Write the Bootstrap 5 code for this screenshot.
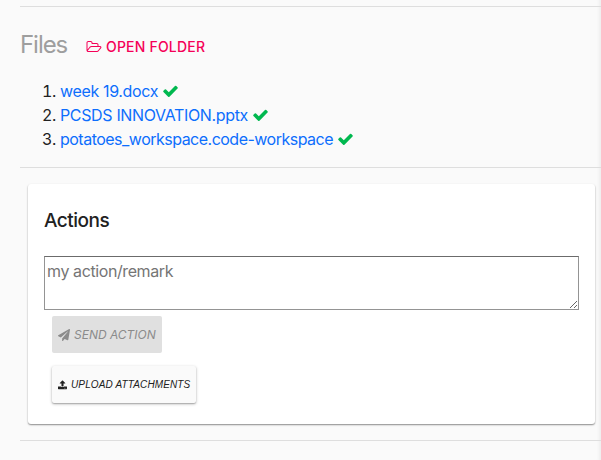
<!DOCTYPE html>
<html lang="en">
<head>
<meta charset="utf-8">
<meta name="viewport" content="width=device-width, initial-scale=1">
<title>Files and actions</title>
<link href="https://cdn.jsdelivr.net/npm/bootstrap@5.3.0/dist/css/bootstrap.min.css" rel="stylesheet">
<style>
body{background:#fafafa;color:#212121;font-family:Inter,"Liberation Sans",sans-serif;font-size:16px;line-height:24px;overflow:hidden}
.page{height:460px;padding:6px 0 0 20px;box-shadow:inset -4px 0 3px -2px #eee}
.rule{height:1px;background:#dedede}
.files-head{height:72px;padding-top:4px}
.files-title{font-size:24px;line-height:32px;font-weight:400;color:#9e9e9e;letter-spacing:-1.05px;width:66px}
.open-link{font-size:14px;font-weight:500;color:#f50057;letter-spacing:.2px;text-decoration:none;gap:4px;padding-top:3px}
.file-list{padding-left:40px;height:88px;letter-spacing:-.35px}
.file-list a{color:#0d6efd;text-decoration:none}
.file-list .long-name{letter-spacing:-.51px}
svg{fill:currentColor;display:inline-block;flex:none}
.tick{fill:#00b84f;vertical-align:-1px;margin-left:5px}
.panel{margin:16px 6px 16px 8px;height:240px;padding:24px 16px 0;border-radius:3px;box-shadow:0 1px 2px rgba(0,0,0,.32),0 1px 1px rgba(0,0,0,.16)}
.panel h2{font-size:19px;line-height:26px;font-weight:500;letter-spacing:-.5px;height:48px;color:#212121}
.remark{height:54px;padding:2px;border:1px solid #949494;border-top-color:#6b6b6b;letter-spacing:-.4px;outline:0;resize:both;background:#fff}
.remark::placeholder{color:#757575;opacity:1}
.act{border:0;border-radius:2px;font-style:italic;margin-left:8px;padding:0 6px;white-space:nowrap;text-align:left}
.send{width:110px;height:37px;margin-top:6px;background:#e0e0e0;color:#8b8b8b;font-size:12px;gap:4px}
.upload{width:144px;height:37px;margin-top:13px;background:#fafafa;color:#212121;font-family:"Liberation Sans",Arial,sans-serif;font-size:10px;letter-spacing:.13px;gap:4px;box-shadow:0 1px 3px rgba(0,0,0,.3),0 1px 1px rgba(0,0,0,.14)}
</style>
</head>
<body>
<main class="page">
  <div class="rule"></div>
  <div class="files-head d-flex align-items-center">
    <h1 class="files-title mb-0">Files</h1>
    <a class="open-link d-flex align-items-center" href="#">
      <svg width="16" height="14" viewBox="0 0 2048 1792"><path d="M1845 931q0-35-53-35h-1088q-40 0-85.500 21.500t-71.500 52.500l-294 363q-18 24-18 40 0 35 53 35h1088q40 0 86-22t71-53l294-363q18-22 18-39zm-1141-163h768v-160q0-40-28-68t-68-28h-576q-40 0-68-28t-28-68v-64q0-40-28-68t-68-28h-320q-40 0-68 28t-28 68v853l256-315q44-53 116-87.500t140-34.500zm1269 163q0 62-46 120l-295 363q-43 53-116 87.500t-140 34.500h-1088q-92 0-158-66t-66-158v-960q0-92 66-158t158-66h320q92 0 158 66t66 158v32h544q92 0 158 66t66 158v160h192q54 0 99 24.500t67 70.500q15 32 15 68z"/></svg>
      <span>OPEN FOLDER</span>
    </a>
  </div>
  <ol class="file-list mb-0">
    <li><a href="#">week 19.docx</a><svg class="tick" width="15" height="13" viewBox="100 250 1592 1380"><path d="M1671 566q0 40-28 68l-724 724-136 136q-28 28-68 28t-68-28l-136-136-362-362q-28-28-28-68t28-68l136-136q28-28 68-28t68 28l294 295 656-657q28-28 68-28t68 28l136 136q28 28 28 68z"/></svg></li>
    <li><a href="#">PCSDS INNOVATION.pptx</a><svg class="tick" width="15" height="13" viewBox="100 250 1592 1380"><path d="M1671 566q0 40-28 68l-724 724-136 136q-28 28-68 28t-68-28l-136-136-362-362q-28-28-28-68t28-68l136-136q28-28 68-28t68 28l294 295 656-657q28-28 68-28t68 28l136 136q28 28 28 68z"/></svg></li>
    <li><a class="long-name" href="#">potatoes_workspace.code-workspace</a><svg class="tick" width="15" height="13" viewBox="100 250 1592 1380"><path d="M1671 566q0 40-28 68l-724 724-136 136q-28 28-68 28t-68-28l-136-136-362-362q-28-28-28-68t28-68l136-136q28-28 68-28t68 28l294 295 656-657q28-28 68-28t68 28l136 136q28 28 28 68z"/></svg></li>
  </ol>
  <div class="rule"></div>
  <section class="panel bg-white">
    <h2 class="mb-0">Actions</h2>
    <textarea class="remark d-block w-100" placeholder="my action/remark"></textarea>
    <button class="act send d-flex align-items-center" disabled>
      <svg width="12" height="12" viewBox="0 0 512 512"><path d="M476 3.200L12.500 270.600c-18.100 10.400-15.800 35.600 2.200 43.200L121 358.400l287.300-253.200c5.500-4.900 13.300 2.600 8.600 8.300L176 407v80.500c0 23.600 28.500 32.900 42.500 15.800L282 426l124.600 52.200c14.200 6 30.400-2.900 33-18.200l72-432C515 7.800 493.300-6.800 476 3.200z"/></svg>
      <span>SEND ACTION</span>
    </button>
    <button class="act upload d-flex align-items-center">
      <svg width="9" height="10" viewBox="64 20 1664 1750"><path d="M1344 1472q0-26-19-45t-45-19-45 19-19 45 19 45 45 19 45-19 19-45zm256 0q0-26-19-45t-45-19-45 19-19 45 19 45 45 19 45-19 19-45zm128-224v320q0 40-28 68t-68 28h-1472q-40 0-68-28t-28-68v-320q0-40 28-68t68-28h427q21 56 70.500 92t110.500 36h256q61 0 110.500-36t70.500-92h427q40 0 68 28t28 68zm-325-648q-17 40-59 40h-256v448q0 26-19 45t-45 19h-256q-26 0-45-19t-19-45v-448h-256q-42 0-59-40-17-39 14-69l448-448q18-19 45-19t45 19l448 448q31 30 14 69z"/></svg>
      <span>UPLOAD ATTACHMENTS</span>
    </button>
  </section>
  <div class="rule"></div>
</main>
<script src="https://cdn.jsdelivr.net/npm/bootstrap@5.3.0/dist/js/bootstrap.bundle.min.js"></script>
</body>
</html>
